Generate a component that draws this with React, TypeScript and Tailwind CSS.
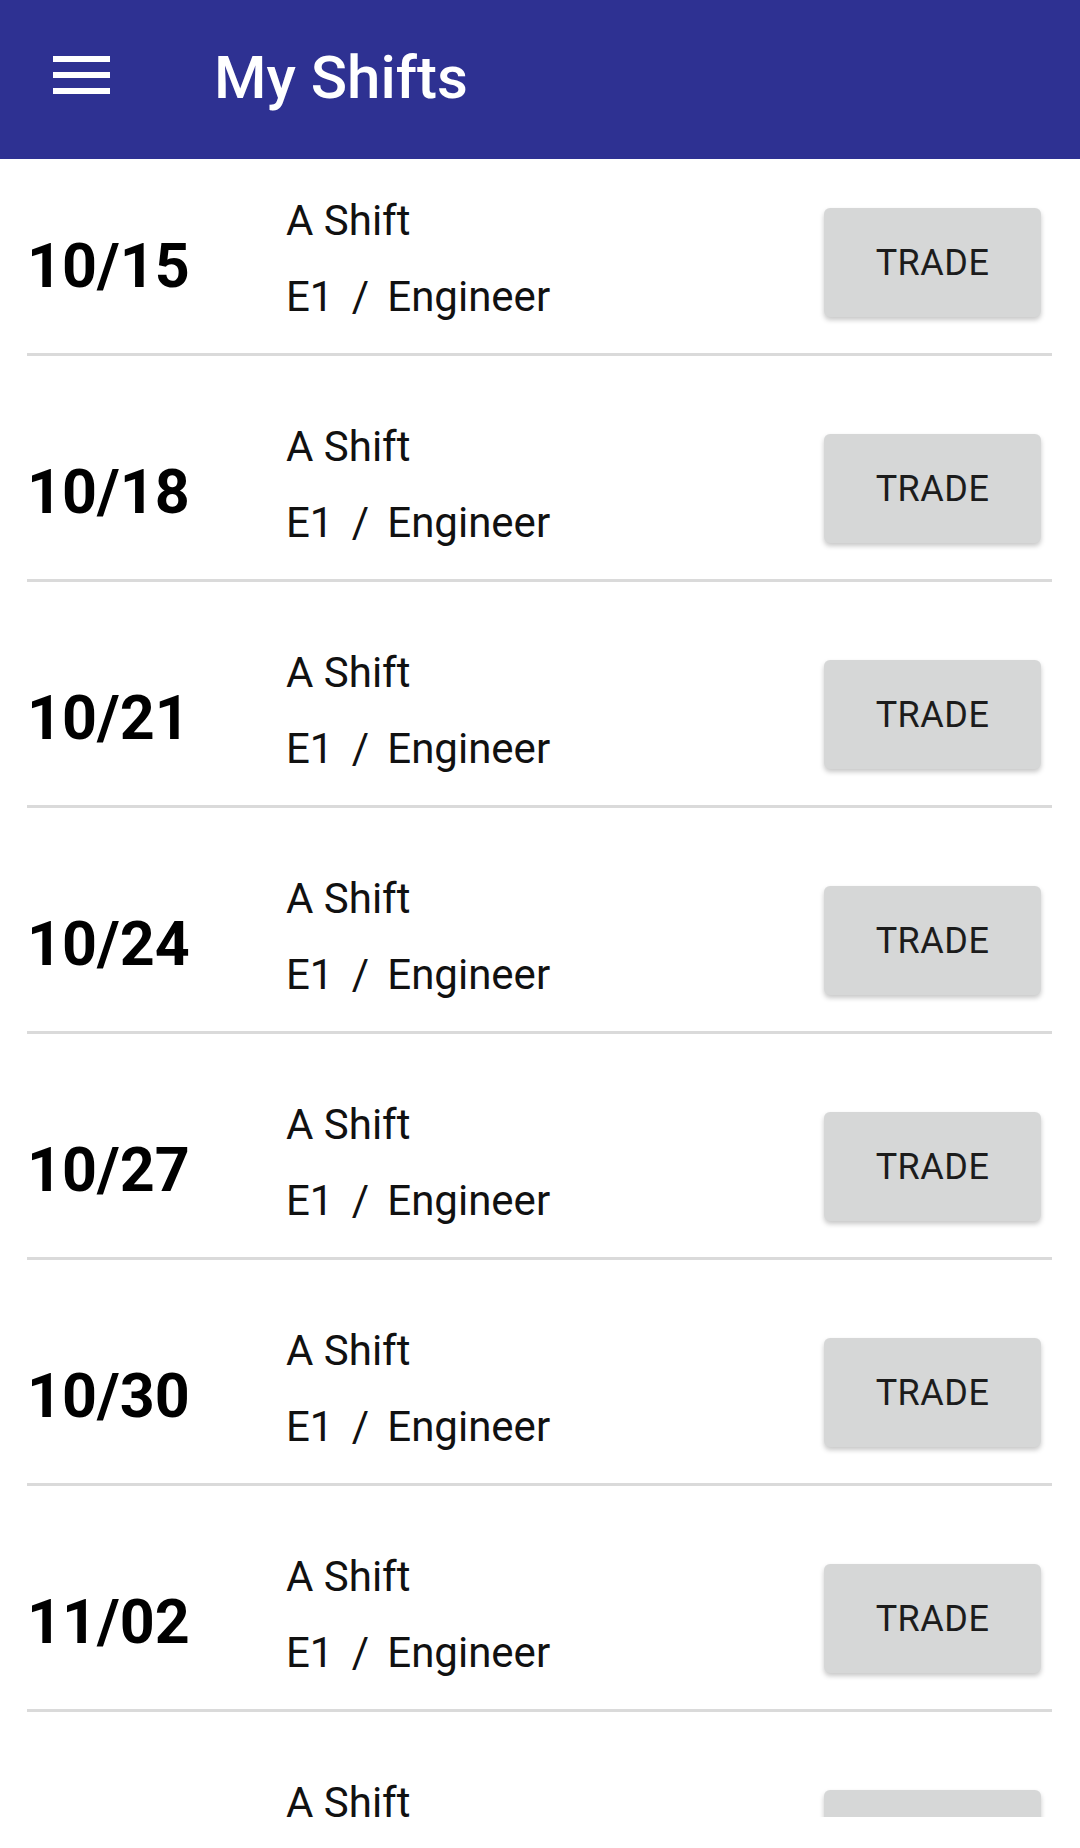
import React from 'react';

const shifts = ['10/15', '10/18', '10/21', '10/24', '10/27', '10/30', '11/02', '11/05'];

const ShiftRow = ({ date }: { date: string }) => (
  <div>
    <div className="pt-[45px] h-[223px]">
      <div className="flex items-center h-[178px] pl-[27px] pr-[39px]">
        <div className="w-[259px] mt-[5px] text-[61px] leading-none font-bold text-black">{date}</div>
        <div className="flex-1 mb-[10px] text-[42px] text-[#111]">
          <div className="leading-[76px]">A Shift</div>
          <div className="leading-[76px] whitespace-pre [word-spacing:-1.3px]">{'E1  /  Engineer'}</div>
        </div>
        <button className="w-[217px] h-[109px] mb-[3px] rounded-[6px] bg-[#d6d7d7] shadow-[0_3px_5px_rgba(0,0,0,0.22)] text-[36px] tracking-[0.5px] text-[#1c1c1c]">
          TRADE
        </button>
      </div>
    </div>
    <div className="mx-[27px] mr-[28px] h-[3px] bg-[#dadada]" />
  </div>
);

export default function App() {
  return (
    <div className="w-[1080px] h-[1848px] bg-white overflow-hidden" style={{ fontFamily: 'Roboto, "Noto Sans", sans-serif' }}>
      {/* App bar */}
      <div className="h-[159px] bg-[#2e3192] flex items-center pl-[53px]">
        <div className="flex flex-col gap-[10px] mb-[9px]">
          <div className="w-[57px] h-[6px] bg-white" />
          <div className="w-[57px] h-[6px] bg-white" />
          <div className="w-[57px] h-[6px] bg-white" />
        </div>
        <div className="ml-[104px] mb-[3px] text-[60px] leading-none font-medium text-white">My Shifts</div>
      </div>

      {/* List, scrolled a little */}
      <div className="h-[1658px] overflow-hidden">
        <div className="-mt-[29px]">
          {shifts.map((d) => (
            <ShiftRow key={d} date={d} />
          ))}
        </div>
      </div>
    </div>
  );
}
